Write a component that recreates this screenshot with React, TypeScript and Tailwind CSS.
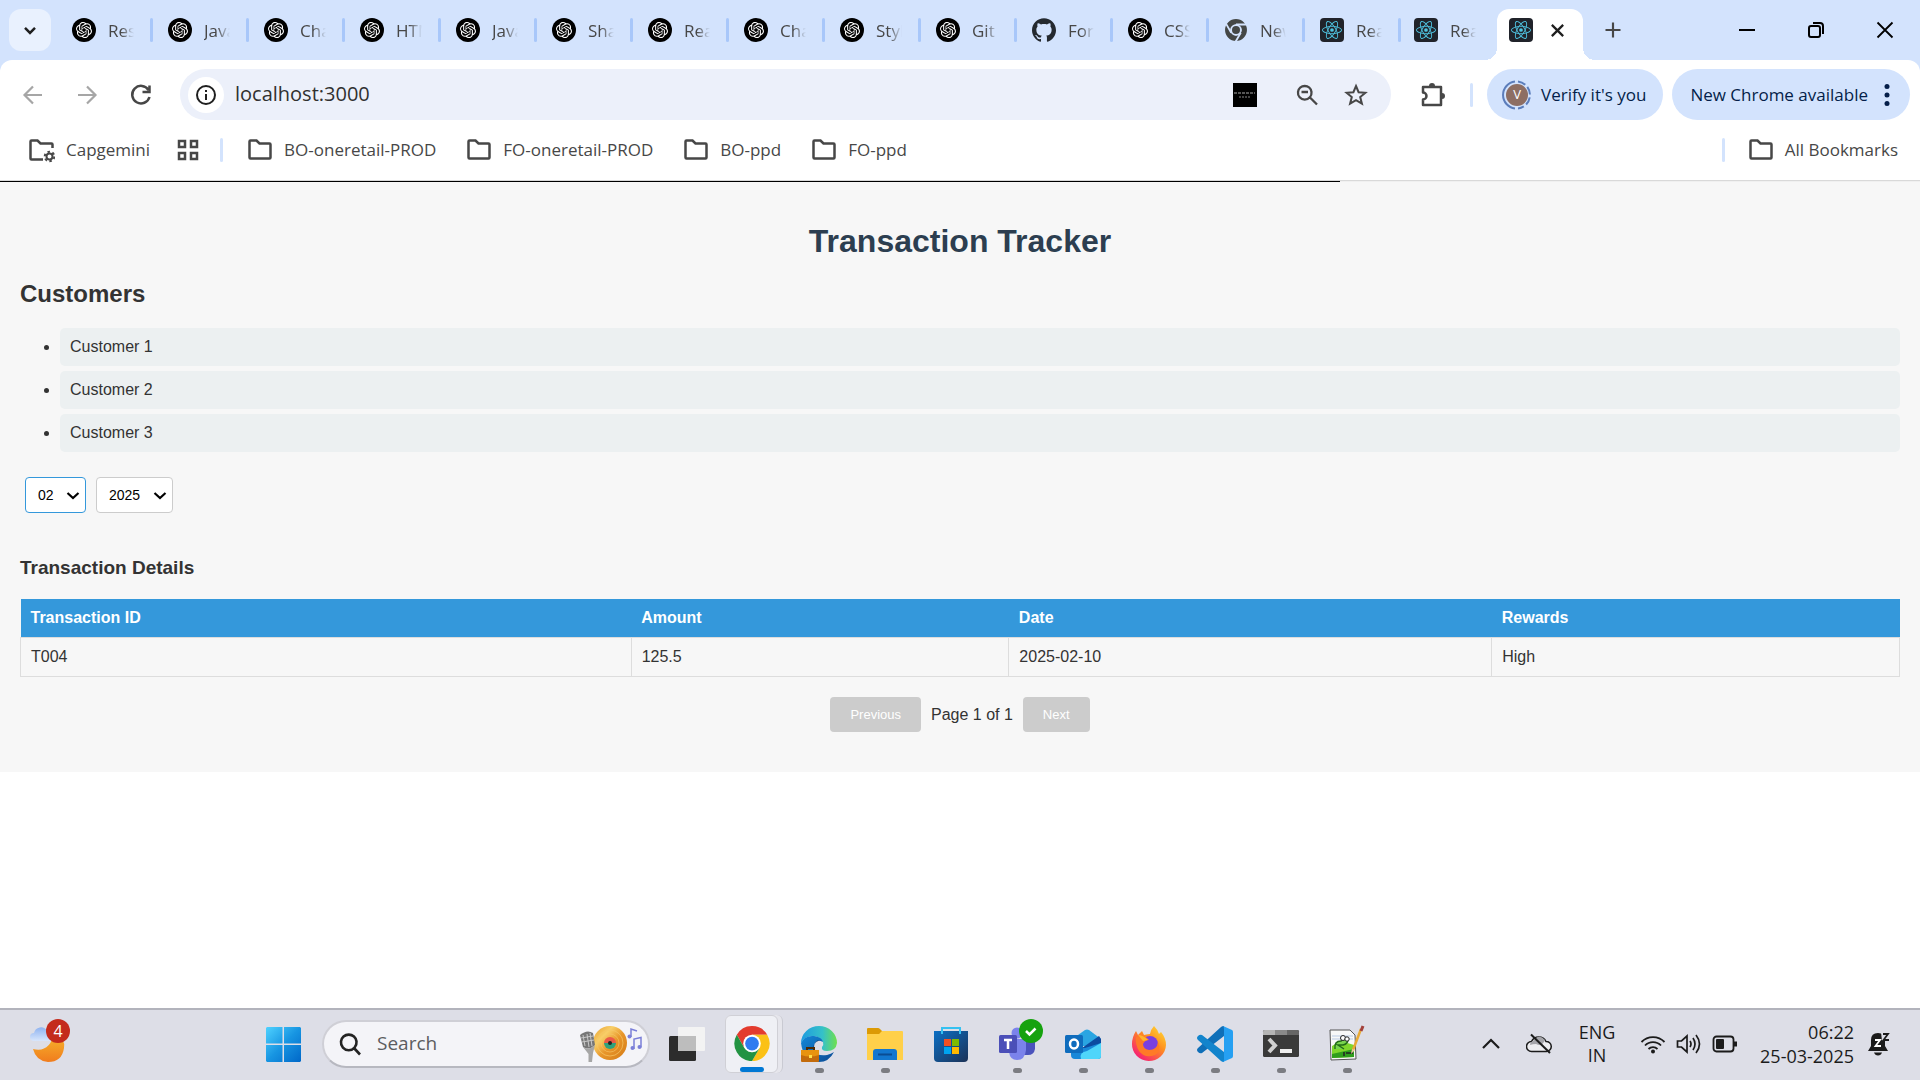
import React, { useState } from "react";
import { SiOpenai, SiReact, SiGithub } from "react-icons/si";

const tabs: { icon: "gpt" | "github" | "chrome" | "react"; label: string }[] = [
  { icon: "gpt", label: "Res" },
  { icon: "gpt", label: "Java" },
  { icon: "gpt", label: "Cha" },
  { icon: "gpt", label: "HTM" },
  { icon: "gpt", label: "Java" },
  { icon: "gpt", label: "Sha" },
  { icon: "gpt", label: "Rea" },
  { icon: "gpt", label: "Cha" },
  { icon: "gpt", label: "Styl" },
  { icon: "gpt", label: "Git" },
  { icon: "github", label: "For" },
  { icon: "gpt", label: "CSS" },
  { icon: "chrome", label: "New" },
  { icon: "react", label: "Rea" },
  { icon: "react", label: "Rea" },
];

function Favicon({ kind }: { kind: string }) {
  if (kind === "gpt")
    return (
      <span className="flex size-6 shrink-0 items-center justify-center rounded-full bg-black text-white">
        <SiOpenai size={16} />
      </span>
    );
  if (kind === "github") return <SiGithub size={24} className="shrink-0 text-[#24292f]" />;
  if (kind === "chrome")
    return (
      <svg width="24" height="24" viewBox="0 0 24 24" className="shrink-0" fill="none" aria-hidden="true">
        <circle cx="12" cy="12" r="8.200" stroke="#444746" strokeWidth="5.500" />
        <path d="M12 6.500 H22.500 M16.800 14.700 L11.500 23.800 M7.200 14.700 L2 5.600" stroke="#d3e3fd" strokeWidth="1.800" />
        <circle cx="12" cy="12" r="5.800" fill="#d3e3fd" />
        <circle cx="12" cy="12" r="4" fill="#444746" />
      </svg>
    );
  return (
    <span className="flex size-6 shrink-0 items-center justify-center rounded-sm bg-[#20232a] text-[#4fc3e0]">
      <SiReact size={20} />
    </span>
  );
}

function Stroke({ d, size = 24, w = 2, box = 24, className = "" }: { d: string; size?: number; w?: number; box?: number; className?: string }) {
  return (
    <svg width={size} height={size} viewBox={`0 0 ${box} ${box}`} fill="none" stroke="currentColor" strokeWidth={w} className={`shrink-0 ${className}`} aria-hidden="true">
      <path d={d} />
    </svg>
  );
}

const FOLDER = "M1.500 3.500 q0-1 1-1 h6 l3 3 h10 q1 0 1 1 v13 q0 1-1 1 h-19 q-1 0-1-1 z";

function Bookmark({ label }: { label: string }) {
  return (
    <a href="#" className="flex items-center gap-3 whitespace-nowrap">
      <Stroke d={FOLDER} w={2.5} className="text-[#474747]" />
      {label}
    </a>
  );
}

function TabStrip() {
  return (
    <div className="flex h-15 items-center bg-[#d3e3fd]">
      <button aria-label="Search tabs" className="ml-[9px] flex size-[42px] shrink-0 items-center justify-center rounded-xl bg-[#e9f1fe]">
        <Stroke d="M6 9.500 l6 6 l6-6" w={3} size={20} className="text-[#1f1f1f]" />
      </button>
      <div className="ml-[21px] flex min-w-0">
        {tabs.map((t, i) => (
          <div key={i} className={`flex min-w-0 items-center ${i < 13 ? "w-24" : i === 13 ? "w-[94px]" : "w-[71px]"}`}>
            <Favicon kind={t.icon} />
            <span className="ml-3 w-[26px] shrink-0 pt-0.5 text-[17px] leading-6 whitespace-nowrap text-[#474747] [mask-image:linear-gradient(to_right,black_50%,transparent)]">
              {t.label}
            </span>
            {i < 14 && <span className="ml-4 h-6 w-[3px] shrink-0 rounded-sm bg-[#a8c7fa]" />}
          </div>
        ))}
      </div>
      <div className="flex h-full shrink-0 items-end">
        <span className="h-3 w-3 bg-[radial-gradient(circle_at_0_0,transparent_12px,white_12px)]" />
        <div className="flex h-[51px] w-[86px] items-center gap-4 rounded-t-xl bg-white pb-[9px] pl-3">
          <Favicon kind="react" />
          <button aria-label="Close tab">
            <Stroke d="M3 3 L15 15 M15 3 L3 15" size={17} box={18} w={2.4} className="text-[#1f1f1f]" />
          </button>
        </div>
        <span className="h-3 w-3 bg-[radial-gradient(circle_at_100%_0,transparent_12px,white_12px)]" />
      </div>
      <button aria-label="New tab" className="ml-2 shrink-0">
        <Stroke d="M12 3 V21 M3 12 H21" size={20} w={2.6} className="text-[#474747]" />
      </button>
      <div className="ml-auto flex shrink-0 items-center gap-[51px] pr-[26px] text-black">
        <button aria-label="Minimize">
          <Stroke d="M1 9 H17" size={18} box={18} />
        </button>
        <button aria-label="Restore">
          <Stroke d="M2 7 q0-2 2-2 h7 q2 0 2 2 v7 q0 2-2 2 h-7 q-2 0-2-2 z M6 2 h7 q3 0 3 3 v8" size={18} box={18} />
        </button>
        <button aria-label="Close">
          <Stroke d="M1.500 1.500 L16.500 16.500 M16.500 1.500 L1.500 16.500" size={18} box={18} w={1.800} />
        </button>
      </div>
    </div>
  );
}

function Toolbar() {
  return (
    <div className="bg-[#d3e3fd]">
      <div className="flex h-[69px] items-center rounded-t-xl bg-white pr-[10px] pl-[21px] text-[#474747]">
        <button aria-label="Back" className="text-[#a6a6a6]">
          <Stroke d="M21 12 H4 M12 3.500 L3.500 12 L12 20.500" w={2.2} />
        </button>
        <button aria-label="Forward" className="ml-[30px] text-[#a6a6a6]">
          <Stroke d="M3 12 H20 M12 3.500 L20.500 12 L12 20.500" w={2.2} />
        </button>
        <button aria-label="Reload" className="ml-[30px]">
          <Stroke d="M19.500 7 A8.800 8.800 0 1 0 20.500 14 M20.500 2.500 V9 H13.500" w={2.500} />
        </button>
        <div className="ml-[27px] flex h-[51px] min-w-0 flex-1 items-center rounded-full bg-[#ecf0fa] pr-[23px] pl-2">
          <button aria-label="Site information" className="flex size-9 shrink-0 items-center justify-center rounded-full bg-white text-[#1f1f1f]">
            <svg width="22" height="22" viewBox="0 0 22 22" fill="none" stroke="currentColor" strokeWidth="2" aria-hidden="true">
              <circle cx="11" cy="11" r="9" />
              <path d="M11 10 V16 M11 6 V8" />
            </svg>
          </button>
          <input aria-label="Address" defaultValue="localhost:3000" className="ml-[11px] min-w-0 flex-1 bg-transparent pb-0.5 text-xl leading-7 text-[#303030] outline-none" />
          <span className="flex size-6 shrink-0 flex-col items-center justify-center bg-black">
            <svg width="24" height="24" viewBox="0 0 24 24" aria-hidden="true">
              <path d="M1 10 H22" stroke="#555" strokeWidth="2" strokeDasharray="3 1" />
              <path d="M6 14 H18" stroke="#444" strokeWidth="2" strokeDasharray="2 1" />
            </svg>
          </span>
          <button aria-label="Zoom" className="ml-[38px]">
            <Stroke d="M16.500 9 A6.800 6.800 0 1 1 3 9 A6.800 6.800 0 0 1 16.500 9 Z M14.500 14 L22 21.500 M6.500 9 H13" w={2.300} />
          </button>
          <button aria-label="Bookmark this tab" className="ml-[25px]">
            <Stroke d="M12 3 L14.600 9.200 L21.400 9.700 L16.200 14.100 L17.900 20.700 L12 17.100 L6.100 20.700 L7.800 14.100 L2.600 9.700 L9.400 9.200 Z" w={2} />
          </button>
        </div>
        <button aria-label="Extensions" className="ml-[29px]">
          <svg width="26" height="26" viewBox="0 0 26 26" fill="none" aria-hidden="true">
            <path d="M3 5 H21 V23 H3 V17.500 a3.500 3.500 0 0 0 0-7 Z" stroke="currentColor" strokeWidth="2.500" strokeLinejoin="round" />
            <path d="M9 4 a3 3 0 0 1 6 0 z M22 11 a3 3 0 0 1 0 6 z" fill="currentColor" />
          </svg>
        </button>
        <span className="ml-[24px] h-6 w-[3px] rounded-sm bg-[#d3e3fd]" />
        <button className="ml-[14px] flex h-[51px] shrink-0 items-center gap-[9px] rounded-full bg-[#d3e3fd] pr-[17px] pl-[15px] text-[17px] text-[#041e49]">
          <span className="relative flex size-[30px] items-center justify-center">
            <svg width="30" height="30" viewBox="0 0 30 30" fill="none" aria-hidden="true">
              <path d="M13 1.500 A13.600 13.600 0 0 0 13 28.500" stroke="#5b7dbb" strokeWidth="2" />
              <path d="M16 1.500 A13.600 13.600 0 0 1 16 28.500" stroke="#5b7dbb" strokeWidth="2" strokeDasharray="8 3" />
              <circle cx="15" cy="15" r="11" fill="#8d6e63" />
            </svg>
            <span className="absolute text-[13px] text-white">V</span>
          </span>
          Verify it's you
        </button>
        <button className="ml-[9px] flex h-[51px] shrink-0 items-center gap-4 rounded-full bg-[#d3e3fd] pr-5 pl-[18px] text-[17px] text-[#041e49]">
          New Chrome available
          <svg width="6" height="26" viewBox="0 0 6 26" fill="currentColor" aria-hidden="true">
            <circle cx="3" cy="4.500" r="2.500" />
            <circle cx="3" cy="13" r="2.500" />
            <circle cx="3" cy="21.500" r="2.500" />
          </svg>
        </button>
      </div>
    </div>
  );
}

function BookmarksBar() {
  return (
    <nav className="flex h-[51px] items-center pr-[22px] pb-[9px] pl-[29px] text-[17px] text-[#474747]">
      <a href="#" className="flex items-center gap-[11px]">
        <svg width="26" height="26" viewBox="0 0 26 26" fill="none" stroke="currentColor" aria-hidden="true">
          <path d="M14 22.500 H2.500 q-1 0-1-1 v-17 q0-1 1-1 h6 l3 3 h11 q1 0 1 1 v3.500" strokeWidth="2.500" />
          <circle cx="20.500" cy="19.500" r="3" strokeWidth="2" />
          <circle cx="20.500" cy="19.500" r="4.800" strokeWidth="2" strokeDasharray="2.500 2.500" />
        </svg>
        Capgemini
      </a>
      <button aria-label="Apps" className="ml-[27px]">
        <Stroke d="M2 2 h6 v6 h-6 z M14 2 h6 v6 h-6 z M2 14 h6 v6 h-6 z M14 14 h6 v6 h-6 z" size={22} box={22} w={2.500} />
      </button>
      <span className="mr-[25px] ml-[21px] h-6 w-[3px] rounded-sm bg-[#d3e3fd]" />
      <div className="flex gap-[31px]">
        <Bookmark label="BO-oneretail-PROD" />
        <Bookmark label="FO-oneretail-PROD" />
        <Bookmark label="BO-ppd" />
        <Bookmark label="FO-ppd" />
      </div>
      <span className="mr-6 ml-auto h-6 w-[3px] rounded-sm bg-[#d3e3fd]" />
      <Bookmark label="All Bookmarks" />
    </nav>
  );
}

function Picker({ label, options, value, active, width }: { label: string; options: string[]; value: string; active?: boolean; width: string }) {
  const [v, setV] = useState(value);
  return (
    <div className={`relative ${width}`}>
      <select
        aria-label={label}
        value={v}
        onChange={(e) => setV(e.target.value)}
        className={`h-9 w-full appearance-none rounded border bg-white pl-3 text-sm text-black outline-none ${active ? "border-[#3498db]" : "border-[#ccc]"}`}
      >
        {options.map((o) => (
          <option key={o}>{o}</option>
        ))}
      </select>
      <Stroke d="M1.500 4 L7 9 L12.500 4" size={14} box={14} w={2.200} className="pointer-events-none absolute top-3 right-[6px] text-black" />
    </div>
  );
}

function Tracker() {
  const rows = [["T004", "125.5", "2025-02-10", "High"]];
  return (
    <section className="bg-[#f7f7f7] px-5 pt-[41px] pb-10 font-['Liberation_Sans',Arial,sans-serif] text-base leading-[18px] text-[#333]">
      <h1 className="text-center text-[32px] leading-9 font-bold text-[#2c3e50]">Transaction Tracker</h1>
      <h2 className="mt-[21px] text-2xl leading-7 font-bold">Customers</h2>
      <ul className="mt-5 flex list-disc flex-col gap-[5px] pl-10">
        {["Customer 1", "Customer 2", "Customer 3"].map((c) => (
          <li key={c} className="rounded-[5px] bg-[#ecf0f1] p-[10px]">
            {c}
          </li>
        ))}
      </ul>
      <div className="mt-[25px] flex gap-[10px] px-[5px]">
        <Picker label="Month" options={["01", "02", "03"]} value="02" active width="w-[61px]" />
        <Picker label="Year" options={["2024", "2025"]} value="2025" width="w-[77px]" />
      </div>
      <h3 className="mt-11 text-[19px] leading-[22px] font-bold">Transaction Details</h3>
      <table className="mt-5 w-full border-collapse text-left">
        <thead>
          <tr className="bg-[#3498db] text-white">
            <th className="w-[32.5%] p-[10px]">Transaction ID</th>
            <th className="w-[20.1%] p-[10px]">Amount</th>
            <th className="w-[25.7%] p-[10px]">Date</th>
            <th className="w-[21.7%] p-[10px]">Rewards</th>
          </tr>
        </thead>
        <tbody>
          {rows.map((r) => (
            <tr key={r[0]}>
              {r.map((c) => (
                <td key={c} className="border border-[#ddd] p-[10px]">
                  {c}
                </td>
              ))}
            </tr>
          ))}
        </tbody>
      </table>
      <div className="mt-5 flex items-center justify-center gap-[10px]">
        <button disabled className="rounded bg-[#ccc] px-5 py-[10px] text-[13px] leading-[15px] text-white">Previous</button>
        <span>Page 1 of 1</span>
        <button disabled className="rounded bg-[#ccc] px-5 py-[10px] text-[13px] leading-[15px] text-white">Next</button>
      </div>
    </section>
  );
}

function Weather() {
  return (
    <svg width="42" height="42" viewBox="0 0 42 42" aria-hidden="true">
      <defs>
        <linearGradient id="moon" x1="0" y1="0" x2="0" y2="1"><stop offset="0" stopColor="#f7b92c" /><stop offset="1" stopColor="#f07c1e" /></linearGradient>
        <linearGradient id="cloud" x1="0" y1="0" x2="0" y2="1"><stop offset="0" stopColor="#8fb3f0" /><stop offset="1" stopColor="#d8e6fc" /></linearGradient>
      </defs>
      <path d="M3 26 Q20 30 24 10 Q36 16 34 25 Q32 39 18 39 Q6 38 3 26Z" fill="url(#moon)" />
      <path d="M4 18 a4 4 0 0 1 0-8 a7 7 0 0 1 13-2 a5 5 0 0 1 6 10 z" fill="url(#cloud)" />
    </svg>
  );
}

function SearchArt() {
  return (
    <svg width="66" height="38" viewBox="0 0 66 38" fill="none" aria-hidden="true">
      <defs>
        <linearGradient id="disc" x1="0" y1="0" x2="1" y2="1"><stop offset="0" stopColor="#e79a28" /><stop offset=".3" stopColor="#f8cf68" /><stop offset=".55" stopColor="#e8962a" /><stop offset="1" stopColor="#d47a16" /></linearGradient>
      </defs>
      <circle cx="32" cy="18" r="17" fill="url(#disc)" />
      <circle cx="32" cy="18" r="13" stroke="#f6c768" strokeWidth="1" opacity=".7" />
      <circle cx="32" cy="18" r="9" stroke="#f6c768" strokeWidth="1" opacity=".6" />
      <path d="M26 18 a6 6 0 0 1 12 0z" fill="#ea5a47" />
      <path d="M26 18 a6 6 0 0 0 12 0z" fill="#2ea27c" />
      <circle cx="32" cy="18" r="2" fill="#222" />
      <path d="M2 10 Q9 4 15 8 L17 20 Q11 26 5 22Z" fill="#777" />
      <path d="M5 10 L7 21 M9 9 L11 22 M12 8 L14 21 M3 13 L15 11 M4 17 L16 15" stroke="#c9c9c9" strokeWidth="1" />
      <path d="M5 22 Q11 26 17 20 L15 28 L14 37 H10.500 V29Z" fill="#a6a6a6" />
      <path d="M53 12 V4 l6 2 M56 24 V14 l7-1.500 v10" stroke="#7b7fd8" strokeWidth="1.500" />
      <circle cx="51.500" cy="11.500" r="2" fill="#7b7fd8" />
      <circle cx="54.500" cy="23" r="2" fill="#7b7fd8" />
      <circle cx="61.500" cy="22" r="2" fill="#7b7fd8" />
    </svg>
  );
}

const art: Record<string, React.ReactNode> = {
  Edge: (
    <>
      <defs>
        <linearGradient id="e1" x1="0" y1="0" x2="1" y2="0"><stop offset="0" stopColor="#1e9be0" /><stop offset=".6" stopColor="#35c1c8" /><stop offset="1" stopColor="#6fe04c" /></linearGradient>
        <linearGradient id="e2" x1="0" y1="0" x2="1" y2="1"><stop offset="0" stopColor="#1488d8" /><stop offset="1" stopColor="#0b4a94" /></linearGradient>
      </defs>
      <path d="M0 17 A18 17 0 0 1 36 17 Q35 25 26 25 Q20 25 21 21 Q23 19 22 16 Q19 10 12 10 Q4 10 0 17Z" fill="url(#e1)" />
      <path d="M0 17 Q4 9 13 10 Q21 11 22 16 Q13 12 13 22 Q15 31 26 29 Q30 28 33 26 Q28 36 18 36 Q2 35 0 17Z" fill="url(#e2)" />
      <path d="M13 22 Q13 14 19 14 Q10 17 13 27Z" fill="#0b3e78" />
      <path d="M6 24 v-2 h7 v2" stroke="#4d2b06" strokeWidth="2" fill="none" />
      <rect x="0" y="24" width="18" height="12" rx="1" fill="#c36b0c" />
      <path d="M0 24 H18 V29 Q9 32 0 29Z" fill="#e8930f" />
      <rect x="8" y="29" width="3" height="3" fill="#ffe04a" />
    </>
  ),
  Files: (
    <>
      <path d="M0 3 q0-1 1-1 h10 q1 0 2 1 l2 2 v4 H0z" fill="#dc9a05" />
      <path d="M0 8 h12 l3-3 h20 q1 0 1 1 v28 H0z" fill="#ffd04a" />
      <path d="M6 34 v-8 q0-3 3-3 h18 q3 0 3 3 v8z" fill="#1277cf" />
      <path d="M11 28.500 h14" stroke="#0a4d93" strokeWidth="2" />
    </>
  ),
  Store: (
    <>
      <defs><linearGradient id="st" x1="0" y1="0" x2="1" y2="1"><stop offset="0" stopColor="#0b6fc4" /><stop offset="1" stopColor="#1c3257" /></linearGradient></defs>
      <path d="M1 5 H35 V32 q0 4-4 4 H5 q-4 0-4-4z" fill="url(#st)" />
      <path d="M9 8 V2 H27 V8" stroke="#35c1f1" strokeWidth="2" fill="none" />
      <rect x="11" y="13" width="7" height="7" fill="#f25022" />
      <rect x="19" y="13" width="7" height="7" fill="#7fba00" />
      <rect x="11" y="21" width="7" height="7" fill="#00a4ef" />
      <rect x="19" y="21" width="7" height="7" fill="#ffb900" />
    </>
  ),
  Teams: (
    <>
      <path d="M22 13 H36 V23 Q35 29 29 29 H22z" fill="#4b53bc" />
      <circle cx="18" cy="7" r="5.500" fill="#7b83eb" />
      <path d="M10 13 H27 V24 Q26 34 18 34 Q11 34 10 26z" fill="#7b83eb" />
      <rect x="0" y="9" width="18" height="18" rx="1.500" fill="#4b4fb8" />
      <path d="M5 14 H13 M9 14 V23" stroke="#fff" strokeWidth="2.500" />
      <circle cx="32" cy="5" r="12" fill="#16a20f" />
      <path d="M27 5 l3.500 3.500 l6-6" stroke="#fff" strokeWidth="2.500" fill="none" />
    </>
  ),
  Outlook: (
    <>
      <path d="M6 14 L20 4 Q22 3 24 4 L36 13 V20 H6z" fill="#2aa5e2" />
      <path d="M17 22 L34 10 L36 13 V19 L20 28z" fill="#0c4ba0" />
      <path d="M6 22 H20 L36 17 V30 q0 3-3 3 H10 q-4 0-4-4z" fill="#1888d9" />
      <path d="M16 33 Q14 26 22 25 L36 17 V30 q0 3-3 3z" fill="#4fd5fa" />
      <rect x="0" y="9" width="18" height="18" rx="1.500" fill="#0f6cbd" />
      <ellipse cx="9" cy="18" rx="4" ry="4.500" fill="none" stroke="#fff" strokeWidth="2.500" />
    </>
  ),
  Firefox: (
    <>
      <defs><linearGradient id="ff" x1="1" y1="0" x2=".2" y2="1"><stop offset="0" stopColor="#ffe63a" /><stop offset=".45" stopColor="#ff8f1f" /><stop offset="1" stopColor="#f5157b" /></linearGradient></defs>
      <path d="M23 0 Q27 4 28 8 L30 6 Q35 12 35 19 A17 16.500 0 0 1 1 18 Q1 11 5 5 L7 9 L11 5 L13 9 Q18 8 19 8 Q20 3 23 0Z" fill="url(#ff)" />
      <circle cx="19" cy="18" r="8" fill="#7a3fe0" />
      <path d="M5 11 Q12 8 16 12 L18 14 Q14 14 12 18 Q12 23 18 24 Q26 24 27 16 Q31 25 24 29 Q14 33 8 25 Q4 18 5 11Z" fill="#ff7a26" />
      <path d="M7 9 Q12 9 17 14 L12 15Z" fill="#ffb52b" />
    </>
  ),
  Code: (
    <>
      <path d="M27 0 L27 10 L5 27 Q3 28 1 26 Q-1 24 1 22 L24 1 Q25 0 27 0Z" fill="#0f6fb8" />
      <path d="M27 36 L27 26 L5 9 Q3 8 1 10 Q-1 12 1 14 L24 35 Q25 36 27 36Z" fill="#1284cc" />
      <path d="M26 0 L35 4 Q36 4.500 36 6 V30 Q36 31.500 35 32 L26 36 Q27 35 27 33 V3 Q27 1 26 0Z" fill="#26a0f2" />
    </>
  ),
  Terminal: (
    <>
      <rect x="0" y="4" width="36" height="27" rx="1.500" fill="#3a3a3a" />
      <path d="M0 9 V5.500 Q0 4 1.500 4 H12 V9z" fill="#b5b5b5" />
      <path d="M12 4 H24 V9 H12z" fill="#8a8a8a" />
      <path d="M24 4 H34.500 Q36 4 36 5.500 V9 H24z" fill="#666" />
      <path d="M6 13 L12 19.500 L6 26" stroke="#d0d0d0" strokeWidth="4" fill="none" />
      <rect x="17" y="23" width="12" height="4" fill="#eee" />
    </>
  ),
  Notepad: (
    <>
      <path d="M1 4 H21 L26 9 L27 33 L2 34z" fill="#f8f8f8" stroke="#555" />
      <path d="M3 10 H24 M3 13 H24" stroke="#b9cbe4" />
      <path d="M3 20 Q12 14 25 19 V31 L3 32z" fill="#7ed62c" />
      <path d="M3 28 L25 23 V31 L3 32z" fill="#2f9e1c" />
      <path d="M6 23 Q5 15 12 15 Q15 10 19 13 Q19 18 14 19 L9 19 L15 23" stroke="#236b18" strokeWidth="1.500" fill="#79d44e" />
      <circle cx="14" cy="12" r="2.500" fill="#fff" stroke="#222" />
      <circle cx="18" cy="13" r="2.200" fill="#fff" stroke="#222" />
      <path d="M15 26 v4 M17 27 h7" stroke="#222" strokeWidth="1.500" />
      <path d="M32 3 L24 24" stroke="#e9aa35" strokeWidth="2.500" />
      <path d="M34 0 L32 5" stroke="#a3413c" strokeWidth="3" />
      <path d="M23 23 L22 28 L26 24z" fill="#e8c79b" />
    </>
  ),
};

function ChromeLogo() {
  return (
    <svg width="36" height="36" viewBox="0 0 36 36" aria-hidden="true">
      <path d="M2.410 9 A18 18 0 0 1 33.590 9 H18 L10.200 22.500Z" fill="#e33b2e" />
      <path d="M33.590 9 A18 18 0 0 1 18 36 L25.800 22.500 L18 9Z" fill="#fbc116" />
      <path d="M2.410 9 A18 18 0 0 0 18 36 L25.800 22.500 L18 27 L10.200 22.500Z" fill="#229342" />
      <circle cx="18" cy="18" r="9" fill="#fff" />
      <circle cx="18" cy="18" r="7" fill="#2f7bf0" />
    </svg>
  );
}

function Taskbar() {
  return (
    <footer className="flex h-18 items-center border-t-2 border-[#b2b3bc] bg-[#dddee7] pb-0.5 text-lg text-[#1b1b1b]">
      <button aria-label="Weather" className="relative ml-[30px] h-[42px] w-[42px]">
        <Weather />
        <span className="absolute -top-1 left-4 flex size-6 items-center justify-center rounded-full bg-[#c42b1c] text-base text-white">4</span>
      </button>
      <button aria-label="Start" className="ml-[194px]">
        <svg width="35" height="35" viewBox="0 0 35 35" aria-hidden="true">
          <defs><linearGradient id="win" x1="0" y1="0" x2="1" y2="1"><stop offset="0" stopColor="#4fd2ff" /><stop offset=".5" stopColor="#1795e2" /><stop offset="1" stopColor="#0067c8" /></linearGradient></defs>
          <path d="M1 0 H16.500 V16.500 H0 V1z M18 0 H34 L35 1 V16.500 H18z M0 18 H16.500 V35 H1 L0 34z M18 18 H35 V34 L34 35 H18z" fill="url(#win)" />
        </svg>
      </button>
      <label className="ml-[21px] flex h-12 w-[328px] items-center rounded-full border-2 border-[#cfcfd6] border-b-[#b7b8c0] bg-[#f4f4f8] pr-1 pl-[14px]">
        <Stroke d="M18.500 9.500 A7.800 7.800 0 1 1 3 9.500 A7.800 7.800 0 0 1 18.500 9.500 Z M15.500 15.500 L22 22.500" w={2.600} className="text-[#222]" />
        <input aria-label="Search" placeholder="Search" className="ml-[15px] w-0 flex-1 bg-transparent text-[19px] outline-none placeholder:text-[#5c5c60]" />
        <SearchArt />
      </label>
      <button aria-label="Task view" className="ml-[19px]">
        <svg width="36" height="34" viewBox="0 0 36 34" aria-hidden="true">
          <rect x="0" y="9" width="27" height="25" rx="1.500" fill="#2c2c2c" />
          <rect x="9" y="0" width="27" height="24" rx="1" fill="#f3f3f3" />
          <path d="M9 9 H27 V24 H9z" fill="#bdbdbd" />
        </svg>
      </button>
      <div className="ml-5 flex rounded-md border-r border-[#c9cad2] bg-[#e6e6ec] pr-1">
        <button aria-label="Chrome" className="flex h-[58px] w-[53px] flex-col items-center rounded-md border border-[#d0d0d6] bg-[#eff0f5] pt-[10px]">
          <ChromeLogo />
          <span className="mt-[6px] h-[5px] w-6 rounded-full bg-[#0078d4]" />
        </button>
      </div>
      <div className="ml-[18px] flex gap-[30px]">
        {Object.keys(art).map((name) => (
          <button key={name} aria-label={name} className="flex h-[58px] w-9 flex-col items-center pt-[11px]">
            <svg width="36" height="36" viewBox="0 0 36 36" className="overflow-visible" aria-hidden="true">
              {art[name]}
            </svg>
            {name !== "Store" && <span className="mt-[6px] h-[5px] w-[9px] rounded-full bg-[#7b7c82]" />}
          </button>
        ))}
      </div>
      <div className="ml-auto flex items-center pr-[30px]">
        <Stroke d="M1 13 L9 5 L17 13" size={18} box={18} w={2.200} />
        <svg width="26" height="22" viewBox="0 0 26 22" className="ml-[26px]" stroke="#1b1b1b" strokeWidth="1.500" aria-hidden="true">
          <path d="M5.500 18.500 A5 5 0 0 1 5.500 8.500 A8 8 0 0 1 20 8.500 A5 5 0 0 1 20.500 18.500Z" fill="#ededf0" />
          <path d="M4 12 Q4 9 7 8 Q13 0 19 7 Q16 14 10 11 Q7 11 4 12Z" fill="#a5a5aa" stroke="none" />
          <path d="M5 1.500 L24 20" strokeWidth="2" />
        </svg>
        <button className="ml-6 w-[42px] text-center leading-[23px]">
          ENG
          <br />
          IN
        </button>
        <svg width="26" height="20" viewBox="0 0 26 20" className="ml-[22px]" fill="none" stroke="currentColor" strokeWidth="1.800" aria-hidden="true">
          <path d="M1.500 8 A16 16 0 0 1 24.500 8 M5 11.500 A11 11 0 0 1 21 11.500 M8.500 15 A6.500 6.500 0 0 1 17.500 15" />
          <circle cx="13" cy="17.500" r="2" fill="currentColor" stroke="none" />
        </svg>
        <svg width="26" height="22" viewBox="0 0 26 22" className="ml-[10px]" fill="none" stroke="currentColor" strokeWidth="1.700" aria-hidden="true">
          <path d="M1.500 8 H5.500 L11 3 V19 L5.500 14 H1.500Z M14 8 Q16 11 14 14 M17 5 Q21 11 17 17 M20 2 Q27 11 20 20" />
        </svg>
        <svg width="26" height="18" viewBox="0 0 26 18" className="ml-[10px]" fill="none" stroke="currentColor" strokeWidth="1.800" aria-hidden="true">
          <rect x="1.500" y="1.500" width="20" height="15" rx="3" />
          <rect x="4" y="4" width="8" height="10" rx="1" fill="currentColor" stroke="none" />
          <path d="M22 9 H25" strokeWidth="5" />
        </svg>
        <button className="ml-[22px] text-right leading-6">
          06:22
          <br />
          25-03-2025
        </button>
        <svg width="22" height="24" viewBox="0 0 22 24" className="ml-[14px]" aria-hidden="true">
          <path d="M0 19 L3 14 V8 Q3 1 10 1 Q17 1 17 8 V14 L20 19Z" fill="currentColor" />
          <path d="M6 20.500 H14 Q13 23.500 10 23.500 Q7 23.500 6 20.500Z" fill="currentColor" />
          <path d="M13 0 h9 v9 h-8z" fill="#dddee7" />
          <path d="M15 2 H20 L15.500 8 H21" stroke="currentColor" strokeWidth="1.800" fill="none" />
          <path d="M7 8 H12 L7.500 14 H13" stroke="#fff" strokeWidth="1.800" fill="none" />
        </svg>
      </div>
    </footer>
  );
}

export default function App() {
  return (
    <div className="flex min-h-screen flex-col bg-white font-['Open_Sans','Noto_Sans',sans-serif]">
      <header>
        <TabStrip />
        <Toolbar />
        <BookmarksBar />
        <div className="h-px bg-[#d9d9d9]" />
        <div className="h-px bg-[#f0f0f0]">
          <div className="h-px w-[69.8%] bg-black" />
        </div>
      </header>
      <main className="flex-1">
        <Tracker />
      </main>
      <Taskbar />
    </div>
  );
}
